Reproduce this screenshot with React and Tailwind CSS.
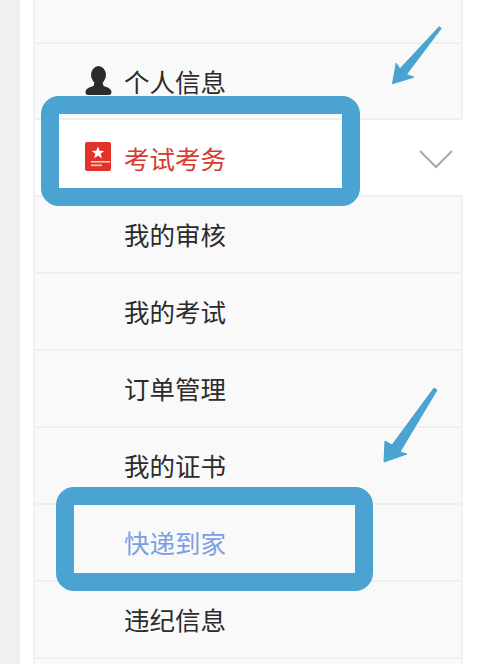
const CJK = 'font-["Noto_Sans_CJK_SC",sans-serif]';

const SUB_ITEMS = [
  { label: '我的审核' },
  { label: '我的考试' },
  { label: '订单管理' },
  { label: '我的证书' },
  { label: '快递到家', active: true },
  { label: '违纪信息' },
];

function IconUser() {
  return (
    <svg width="27" height="30" viewBox="0 0 27 30" fill="#2b2b2b">
      <ellipse cx="13.5" cy="9" rx="7.5" ry="9" />
      <path d="M9.5 16 L17.5 16 L18.5 20 C22.5 21 26.5 23 26.5 26 C26.5 28 25.5 29 23.5 29 L3.5 29 C1.5 29 0.5 28 0.5 26 C0.5 23 4.5 21 8.5 20 Z" />
    </svg>
  );
}

function IconExam() {
  return (
    <svg className="mb-[4px]" width="26" height="29" viewBox="0 0 26 29">
      <rect width="26" height="29" rx="2" fill="#e2332a" />
      <path d="M13 4.5 L14.7 8.8 L19.2 9 L15.7 11.8 L16.9 16.2 L13 13.7 L9.1 16.2 L10.3 11.8 L6.8 9 L11.3 8.8 Z" fill="#fff" />
      <rect x="6" y="19" width="19" height="1.6" fill="#f6c9c5" />
      <rect x="6" y="22.5" width="11" height="1.6" fill="#f6c9c5" />
    </svg>
  );
}

function Arrow({ className, points }) {
  return (
    <svg className={`absolute ${className}`} viewBox="0 0 60 80" fill="#4ba3d2" stroke="#4ba3d2" strokeLinejoin="round">
      <polygon points={points} />
    </svg>
  );
}

export default function App() {
  return (
    <div className={`relative h-[664px] w-[492px] overflow-hidden bg-white ${CJK}`}>
      <div className="flex h-full">
        <div className="w-5 shrink-0 bg-[#f0f0f0]" />
        <div className="ml-[13px] w-[430px] shrink-0 border-x-2 border-[#f0f0f0] bg-[#f9f9f9]">
          <div className="h-[44px] border-b-2 border-[#efefef]" />

          <div className="flex h-[76px] items-center gap-3 border-b-2 border-[#efefef] pl-[50px] text-[25.5px] text-[#2b2b2b]">
            <IconUser />
            <span>个人信息</span>
          </div>

          <div className="-mr-[2px] flex h-[77px] items-center gap-[13px] border-b-2 border-[#efefef] bg-white pl-[50px] pr-[10px] pt-[2px] text-[25.5px] text-[#d93a2f]">
            <IconExam />
            <span className="flex-1">考试考务</span>
            <svg width="34" height="20" viewBox="0 0 34 20" fill="none" stroke="#a8a8a8" strokeWidth="2">
              <polyline points="1,2 17,18 33,2" />
            </svg>
          </div>

          {SUB_ITEMS.map((item) => (
            <div
              key={item.label}
              className={`flex h-[77px] items-center border-b-2 border-[#efefef] pl-[89px] text-[25.5px] ${
                item.active ? 'text-[#7c9fe4]' : 'text-[#2b2b2b]'
              }`}
            >
              {item.label}
            </div>
          ))}
        </div>
      </div>

      <div className="absolute left-[41px] top-[96px] h-[110px] w-[319px] rounded-[18px] border-[18px] border-[#4ba3d2]" />
      <div className="absolute left-[56px] top-[487px] h-[104px] w-[317px] rounded-[18px] border-[18px] border-[#4ba3d2]" />

      <Arrow className="left-[384px] top-[20px] h-[75px] w-[60px]" points="7,68 11,46 15,52 57,7 59,9 22,58 30,61" />
      <Arrow className="left-[380px] top-[385px] h-[80px] w-[60px]" points="4,77 5,56 12,60 54,3 57,5 20,67 27,69" />
    </div>
  );
}
